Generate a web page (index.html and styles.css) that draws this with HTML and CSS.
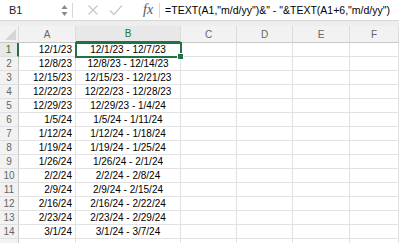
FILE: index.html
```
<!DOCTYPE html>
<html>
<head>
	<meta charset="UTF-8">
	<title>Sheet1</title>
	<link rel="stylesheet" href="styles.css">
</head>
<body>
	<div class="formula-bar">
		<div class="name-box">
			<span class="cell-ref">B1</span>
			<svg class="spinner" width="7" height="13" viewBox="0 0 7 13">
				<path d="M3.5 1 L6.5 5 L0.5 5 Z" fill="#8a8a8a"/>
				<path d="M3.5 12 L6.5 8 L0.5 8 Z" fill="#8a8a8a"/>
			</svg>
		</div>
		<div class="bar-sep"></div>
		<svg class="tool" width="12" height="12" viewBox="0 0 12 12">
			<path d="M1.5 1.5 L10.5 10.5 M10.5 1.5 L1.5 10.5" stroke="#c9c9c9" stroke-width="1.3" fill="none"/>
		</svg>
		<svg class="tool" width="14" height="12" viewBox="0 0 14 12">
			<path d="M1 6.5 L5 10.5 L13 1.5" stroke="#c9c9c9" stroke-width="1.3" fill="none"/>
		</svg>
		<span class="fx">fx</span>
		<div class="bar-sep"></div>
		<span class="formula">=TEXT(A1,"m/d/yy")&amp;" - "&amp;TEXT(A1+6,"m/d/yy")</span>
	</div>
	<div class="bar-gap"></div>
	<div class="sheet">
		<div class="hd corner"><span class="corner-mark"></span></div>
		<div class="hd">A</div>
		<div class="hd hd-active">B</div>
		<div class="hd">C</div>
		<div class="hd">D</div>
		<div class="hd">E</div>
		<div class="hd">F</div>

		<div class="rn rn-active">1</div><div class="c num">12/1/23</div><div class="c mid selected">12/1/23 - 12/7/23</div><div class="c"></div><div class="c"></div><div class="c"></div><div class="c"></div>
		<div class="rn">2</div><div class="c num">12/8/23</div><div class="c mid">12/8/23 - 12/14/23</div><div class="c"></div><div class="c"></div><div class="c"></div><div class="c"></div>
		<div class="rn">3</div><div class="c num">12/15/23</div><div class="c mid">12/15/23 - 12/21/23</div><div class="c"></div><div class="c"></div><div class="c"></div><div class="c"></div>
		<div class="rn">4</div><div class="c num">12/22/23</div><div class="c mid">12/22/23 - 12/28/23</div><div class="c"></div><div class="c"></div><div class="c"></div><div class="c"></div>
		<div class="rn">5</div><div class="c num">12/29/23</div><div class="c mid">12/29/23 - 1/4/24</div><div class="c"></div><div class="c"></div><div class="c"></div><div class="c"></div>
		<div class="rn">6</div><div class="c num">1/5/24</div><div class="c mid">1/5/24 - 1/11/24</div><div class="c"></div><div class="c"></div><div class="c"></div><div class="c"></div>
		<div class="rn">7</div><div class="c num">1/12/24</div><div class="c mid">1/12/24 - 1/18/24</div><div class="c"></div><div class="c"></div><div class="c"></div><div class="c"></div>
		<div class="rn">8</div><div class="c num">1/19/24</div><div class="c mid">1/19/24 - 1/25/24</div><div class="c"></div><div class="c"></div><div class="c"></div><div class="c"></div>
		<div class="rn">9</div><div class="c num">1/26/24</div><div class="c mid">1/26/24 - 2/1/24</div><div class="c"></div><div class="c"></div><div class="c"></div><div class="c"></div>
		<div class="rn">10</div><div class="c num">2/2/24</div><div class="c mid">2/2/24 - 2/8/24</div><div class="c"></div><div class="c"></div><div class="c"></div><div class="c"></div>
		<div class="rn">11</div><div class="c num">2/9/24</div><div class="c mid">2/9/24 - 2/15/24</div><div class="c"></div><div class="c"></div><div class="c"></div><div class="c"></div>
		<div class="rn">12</div><div class="c num">2/16/24</div><div class="c mid">2/16/24 - 2/22/24</div><div class="c"></div><div class="c"></div><div class="c"></div><div class="c"></div>
		<div class="rn">13</div><div class="c num">2/23/24</div><div class="c mid">2/23/24 - 2/29/24</div><div class="c"></div><div class="c"></div><div class="c"></div><div class="c"></div>
		<div class="rn">14</div><div class="c num">3/1/24</div><div class="c mid">3/1/24 - 3/7/24</div><div class="c"></div><div class="c"></div><div class="c"></div><div class="c"></div>
		<div class="rn"></div><div class="c"></div><div class="c"></div><div class="c"></div><div class="c"></div><div class="c"></div><div class="c"></div>
	</div>
</body>
</html>
```

FILE: styles.css
```
body {
	margin: 0;
	background: #ffffff;
	font-family: "Liberation Sans", Arial, sans-serif;
	overflow: hidden;
}

/* formula bar */
.formula-bar {
	height: 21px;
	display: flex;
	align-items: center;
	border-bottom: 1px solid #d6d6d6;
	box-sizing: border-box;
}
.name-box {
	width: 72px;
	height: 100%;
	display: flex;
	align-items: center;
	justify-content: space-between;
	padding: 0 4px 0 9px;
	box-sizing: border-box;
}
.cell-ref {
	font-size: 11px;
	color: #222;
}
.bar-sep {
	width: 1px;
	height: 15px;
	background: #d8d8d8;
}
.tool {
	margin-left: 14px;
	margin-right: 2px;
}
.tool + .tool {
	margin-left: 8px;
}
.fx {
	font-family: "Liberation Serif", serif;
	font-style: italic;
	font-size: 14px;
	color: #555;
	margin: 0 6px 0 18px;
	line-height: 1;
}
.formula {
	font-size: 10.5px;
	color: #000;
	margin-left: 5px;
	white-space: nowrap;
}
.bar-gap {
	height: 5px;
	background: #eeeeee;
}

/* grid */
.sheet {
	display: grid;
	grid-template-columns: 19px 57px 105px 56px 56px 57px 49px;
	grid-template-rows: 17px;
	grid-auto-rows: 14px;
}
.hd {
	background: #f2f2f2;
	border-right: 1px solid #dcdcdc;
	border-bottom: 1px solid #c9c9c9;
	box-sizing: border-box;
	font-size: 10px;
	color: #666;
	display: flex;
	align-items: center;
	justify-content: center;
}
.hd-active {
	color: #217346;
	background: #e8e8e8;
	border-bottom: 2px solid #217346;
}
.corner {
	position: relative;
}
.corner-mark {
	position: absolute;
	right: 2px;
	bottom: 2px;
	width: 0;
	height: 0;
	border-left: 11px solid transparent;
	border-bottom: 11px solid #d6d6d6;
}
.rn {
	background: #f2f2f2;
	border-right: 1px solid #c9c9c9;
	border-bottom: 1px solid #e0e0e0;
	box-sizing: border-box;
	font-size: 10px;
	color: #666;
	display: flex;
	align-items: center;
	justify-content: center;
}
.rn-active {
	color: #217346;
	background: #e8e8e8;
	border-right: 2px solid #217346;
}
.c {
	border-right: 1px solid #e2e2e2;
	border-bottom: 1px solid #e2e2e2;
	box-sizing: border-box;
	font-size: 10px;
	color: #000;
	display: flex;
	align-items: center;
	padding: 0 3px;
	white-space: nowrap;
}
.num {
	justify-content: flex-end;
}
.mid {
	justify-content: center;
}
.selected {
	position: relative;
	z-index: 1;
	outline: 2px solid #217346;
	outline-offset: -1px;
}
.selected::after {
	content: "";
	position: absolute;
	right: -4px;
	bottom: -4px;
	width: 5px;
	height: 5px;
	background: #217346;
	border: 1px solid #fff;
}
```
